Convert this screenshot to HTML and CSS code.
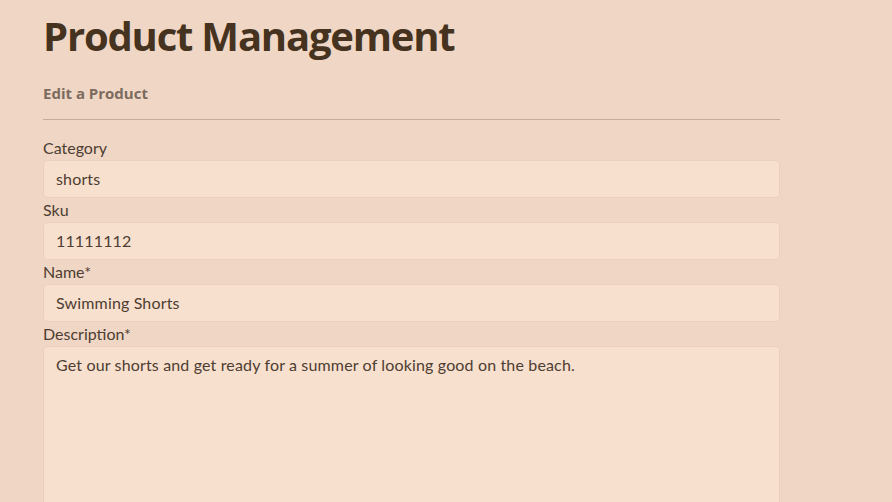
FILE: index.html
```html
<!DOCTYPE html>
<html lang="en">
<head>
<meta charset="utf-8">
<title>Product Management</title>
<link rel="stylesheet" href="styles.css">
</head>
<body>
<main class="page">
  <h1 class="title">Product Management</h1>
  <h2 class="subtitle">Edit a Product</h2>
  <hr class="rule">
  <form class="form">
    <div class="field">
      <label class="label" for="category">Category</label>
      <input class="input" id="category" type="text" value="shorts">
    </div>
    <div class="field">
      <label class="label" for="sku">Sku</label>
      <input class="input" id="sku" type="text" value="11111112">
    </div>
    <div class="field">
      <label class="label" for="name">Name*</label>
      <input class="input" id="name" type="text" value="Swimming Shorts">
    </div>
    <div class="field">
      <label class="label" for="description">Description*</label>
      <textarea class="input textarea" id="description">Get our shorts and get ready for a summer of looking good on the beach.</textarea>
    </div>
  </form>
</main>
</body>
</html>
```
FILE: styles.css
```css
html, body {
  margin: 0;
  padding: 0;
  background: #f0d7c5;
  overflow: hidden;
}
body {
  font-family: Lato, "Open Sans", sans-serif;
  color: #4a3a2e;
}
.page {
  width: 737px;
  margin-left: 43px;
  padding-top: 12px;
}
.title {
  font-family: "Open Sans", Lato, sans-serif;
  font-weight: 700;
  font-size: 40px;
  line-height: 48px;
  margin: 0;
  color: #46331f;
  letter-spacing: -1.2px;
}
.subtitle {
  font-family: "Open Sans", Lato, sans-serif;
  font-weight: 700;
  font-size: 15px;
  line-height: 20px;
  margin: 23px 0 0;
  color: #7c6b5e;
}
.rule {
  border: 0;
  border-top: 1px solid #c7ab99;
  margin: 16px 0 0;
}
.form {
  display: flex;
  flex-direction: column;
  margin-top: 16px;
}
.field {
  display: flex;
  flex-direction: column;
}
.label {
  font-size: 16px;
  line-height: 24px;
  color: #4d3d32;
}
.input {
  box-sizing: border-box;
  height: 38px;
  padding: 0 12px 2px;
  border: 1px solid #ead0bd;
  border-radius: 4px;
  background: #f8e0ce;
  font-family: Lato, sans-serif;
  font-size: 16px;
  letter-spacing: 0.15px;
  color: #4d3d32;
  outline: none;
}
.textarea {
  height: 220px;
  padding: 7px 12px;
  resize: none;
  line-height: 22px;
}
```
